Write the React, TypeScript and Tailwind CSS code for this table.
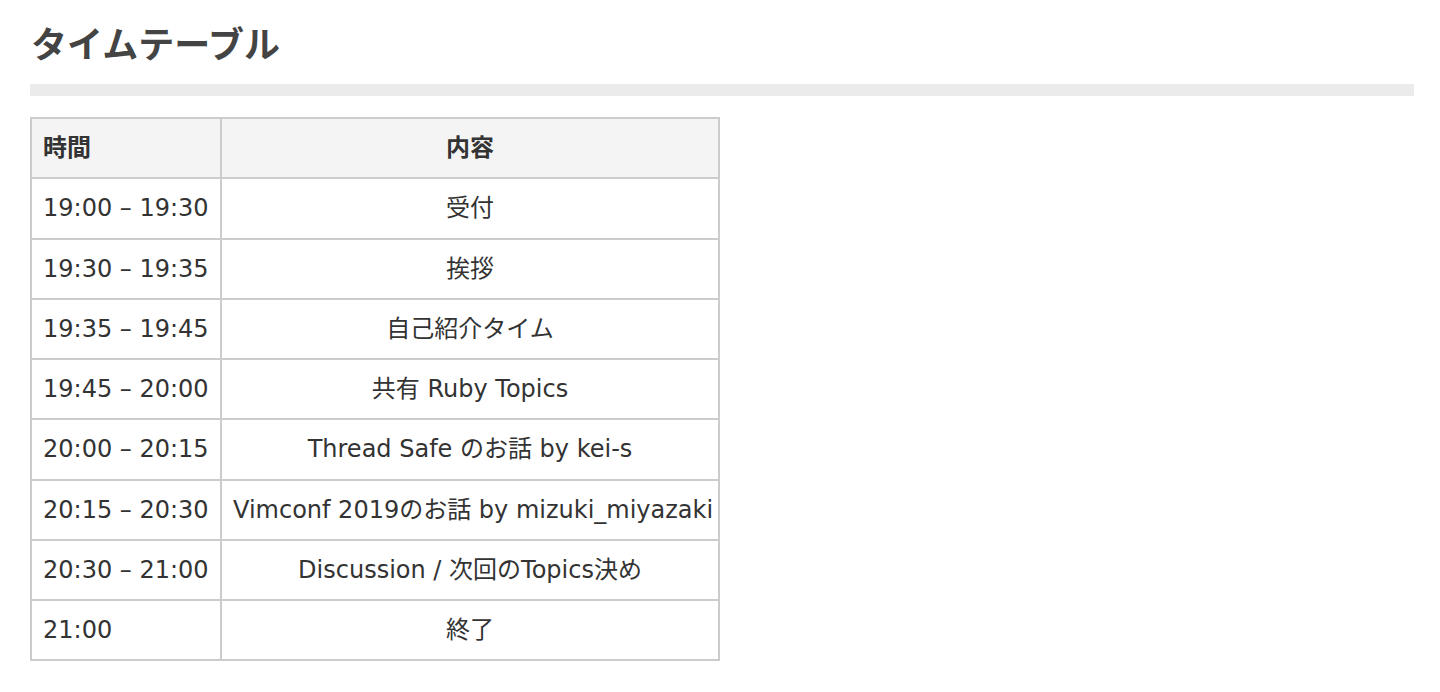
import React from "react";

const rows: [string, string][] = [
  ["19:00 – 19:30", "受付"],
  ["19:30 – 19:35", "挨拶"],
  ["19:35 – 19:45", "自己紹介タイム"],
  ["19:45 – 20:00", "共有 Ruby Topics"],
  ["20:00 – 20:15", "Thread Safe のお話 by kei-s"],
  ["20:15 – 20:30", "Vimconf 2019のお話 by mizuki_miyazaki"],
  ["20:30 – 21:00", "Discussion / 次回のTopics決め"],
  ["21:00", "終了"],
];

export default function App() {
  return (
    <div
      className="min-h-[692px] bg-white text-[#333]"
      style={{ fontFamily: '"DejaVu Sans", "Noto Sans CJK JP", sans-serif' }}
    >
      <div className="pl-[30px] pr-[26px] pt-[21px]">
        <h2 className="text-[36px] font-bold leading-[50px] text-[#444] pl-[1px]">タイムテーブル</h2>
        <div className="mt-[13px] h-[12px] bg-[#ebebeb]" />
        <table className="mt-[21px] border-collapse table-fixed w-[688px] text-[24px]">
          <colgroup>
            <col className="w-[190px]" />
            <col className="w-[498px]" />
          </colgroup>
          <thead>
            <tr className="bg-[#f4f4f4]">
              <th className="h-[60.25px] border-2 border-[#cccccc] px-[11px] text-left font-bold">時間</th>
              <th className="h-[60.25px] border-2 border-[#cccccc] px-[11px] text-center font-bold">内容</th>
            </tr>
          </thead>
          <tbody>
            {rows.map(([t, c], i) => (
              <tr key={i}>
                <td className="h-[60.25px] border-2 border-[#cccccc] px-[11px] text-left whitespace-nowrap">{t}</td>
                <td className="h-[60.25px] border-2 border-[#cccccc] px-[11px] text-center whitespace-nowrap">{c}</td>
              </tr>
            ))}
          </tbody>
        </table>
      </div>
    </div>
  );
}
